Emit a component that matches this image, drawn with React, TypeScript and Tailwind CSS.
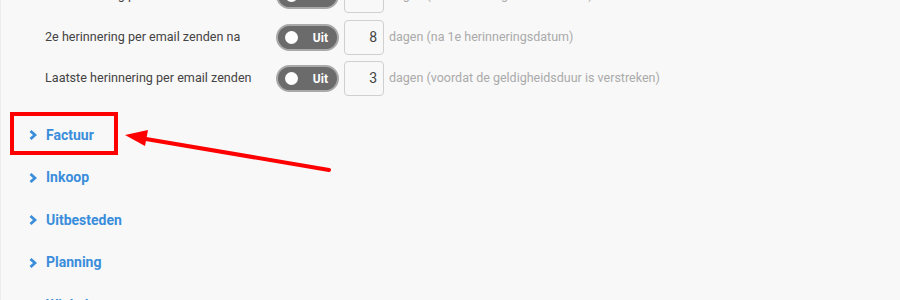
const reminders = [
  { label: "1e herinnering per email zenden na", value: 14, hint: "dagen (na verzending van de offerte)" },
  { label: "2e herinnering per email zenden na", value: 8, hint: "dagen (na 1e herinneringsdatum)" },
  { label: "Laatste herinnering per email zenden", value: 3, hint: "dagen (voordat de geldigheidsduur is verstreken)" },
];

const sections = ["Factuur", "Inkoop", "Uitbesteden", "Planning", "Winkel"];

function Toggle() {
  return (
    <div className="flex h-[27px] w-[63px] shrink-0 items-center rounded-full border-2 border-[#a9a9a9] bg-[#6b6b6b] pl-[7px] pr-[9px]">
      <span className="h-[13px] w-[13px] rounded-full bg-white" />
      <span className="ml-auto text-[12px] font-bold text-white">Uit</span>
    </div>
  );
}

function Chevron() {
  return (
    <svg width="8" height="10" viewBox="0 0 8 10" className="shrink-0">
      <path d="M1.5 1 L6 5 L1.5 9" fill="none" stroke="#3a8ddb" strokeWidth="2.8" />
    </svg>
  );
}

export default function App() {
  return (
    <div
      className="relative h-[300px] w-[900px] overflow-hidden border-l border-[#ececec] bg-[#f8f8f8]"
      style={{ fontFamily: "Roboto, 'Liberation Sans', sans-serif" }}
    >
      <div className="mt-[-26px] flex flex-col pl-[44px]">
        {reminders.map((r, i) => (
          <div key={r.label} className={`flex items-center ${i === 0 ? "h-[43px]" : "h-[41px]"}`}>
            <span className="w-[231px] shrink-0 text-[12.6px] text-[#444]">{r.label}</span>
            <Toggle />
            <div className="ml-[5px] flex h-[35px] w-[40px] shrink-0 items-center justify-end rounded-[4px] border border-[#cfcfcf] bg-[#f8f8f8] pr-[6px] text-[14px] text-[#444]">
              {r.value}
            </div>
            <span className="ml-[5px] text-[12.5px] text-[#aaa]">{r.hint}</span>
          </div>
        ))}
      </div>

      <div className="mt-[15px] flex flex-col pl-[28px]">
        {sections.map((s) => (
          <div key={s} className="flex h-[42.5px] items-center gap-[9px]">
            <Chevron />
            <span className="text-[14px] font-bold text-[#3a8ddb]">{s}</span>
          </div>
        ))}
      </div>

      <div className="pointer-events-none absolute left-[9px] top-[112px] h-[43px] w-[108px] border-4 border-[#ff0000]" />
      <svg className="pointer-events-none absolute left-0 top-0" width="900" height="300">
        <line x1="328" y1="170" x2="142" y2="138.5" stroke="#ff0000" strokeWidth="4" strokeLinecap="round" />
        <polygon points="124,135 147,130 144,146" fill="#ff0000" />
      </svg>
    </div>
  );
}
